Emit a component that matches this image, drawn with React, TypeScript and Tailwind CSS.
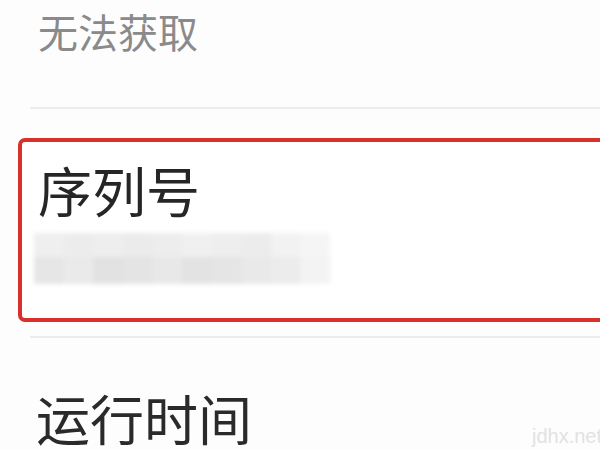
import React from "react";

const cjk = { fontFamily: '"Noto Sans CJK SC", "Noto Sans", sans-serif' };

function Mosaic() {
  const top = ["#efefef", "#ececec", "#eeeeee", "#ebebeb", "#ededed", "#f0f0f0", "#eeeeee", "#ececec", "#f2f2f2", "#f5f5f5"];
  const bottom = ["#e6e6e6", "#eaeaea", "#e2e2e2", "#e4e4e4", "#e8e8e8", "#e3e3e3", "#e5e5e5", "#e9e9e9", "#ececec", "#f3f3f3"];
  return (
    <div className="flex flex-col w-[296px] blur-[2px]">
      <div className="flex h-[24px]">
        {top.map((c, i) => (
          <div key={i} className="flex-1" style={{ backgroundColor: c }} />
        ))}
      </div>
      <div className="flex h-[27px]">
        {bottom.map((c, i) => (
          <div key={i} className="flex-1" style={{ backgroundColor: c }} />
        ))}
      </div>
    </div>
  );
}

export default function App() {
  return (
    <div className="relative w-[600px] h-[450px] overflow-hidden bg-[#fdfdfd]" style={cjk}>
      <div className="pl-[38px] pt-[11px] text-[40px] leading-[40px] text-[#8a8a8a]">无法获取</div>
      <div className="ml-[30px] mt-[56px] h-[2px] bg-[#ececec]" />
      <div className="ml-[18px] mr-[-30px] mt-[29px] h-[184px] border-[4px] border-[#d8302b] rounded-[7px] bg-white pl-[16px] pt-[21px]">
        <div className="text-[54px] leading-[54px] text-[#262626] whitespace-nowrap">序列号</div>
        <div className="mt-[16px] ml-[-4px]">
          <Mosaic />
        </div>
      </div>
      <div className="ml-[30px] mt-[14px] h-[2px] bg-[#ebebf0]" />
      <div className="pl-[36px] mt-[53px] text-[54px] leading-[54px] text-[#2a2a2a] whitespace-nowrap">运行时间</div>
      <div
        className="absolute right-[-2px] bottom-[4px] text-[20px] leading-[20px] text-[#e2e2e2]"
        style={{ fontFamily: '"Liberation Sans", Arial, sans-serif' }}
      >
        jdhx.net
      </div>
    </div>
  );
}
